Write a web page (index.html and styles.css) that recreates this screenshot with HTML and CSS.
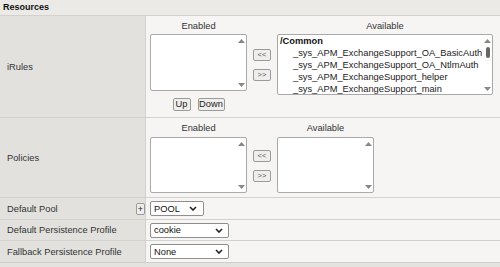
FILE: index.html
```html
<!DOCTYPE html>
<html lang="en">
<head>
<meta charset="UTF-8">
<title>Resources</title>
<link rel="stylesheet" href="styles.css">
</head>
<body>

<div class="section-title">Resources</div>

<div class="props">
  <!-- iRules -->
  <div class="label">iRules</div>
  <div class="value">
    <div class="duallist">
      <div class="col">
        <div class="col-title">Enabled</div>
        <div class="listbox small">
          <div class="items"></div>
          <div class="scroll">
            <svg width="7" height="5" viewBox="0 0 7 5"><path d="M0 4 L3.5 0 L7 4 Z" fill="#888"/></svg>
            <svg width="7" height="5" viewBox="0 0 7 5"><path d="M0 1 L3.5 5 L7 1 Z" fill="#888"/></svg>
          </div>
        </div>
        <div class="order">
          <button class="btn">Up</button>
          <button class="btn">Down</button>
        </div>
      </div>
      <div class="moves irules-moves">
        <button class="btn move">&lt;&lt;</button>
        <button class="btn move">&gt;&gt;</button>
      </div>
      <div class="col">
        <div class="col-title">Available</div>
        <div class="listbox wide">
          <div class="items">
            <div class="opt group">/Common</div>
            <div class="opt">_sys_APM_ExchangeSupport_OA_BasicAuth</div>
            <div class="opt">_sys_APM_ExchangeSupport_OA_NtlmAuth</div>
            <div class="opt">_sys_APM_ExchangeSupport_helper</div>
            <div class="opt">_sys_APM_ExchangeSupport_main</div>
          </div>
          <div class="scroll">
            <svg width="7" height="5" viewBox="0 0 7 5"><path d="M0 4 L3.5 0 L7 4 Z" fill="#888"/></svg>
            <div class="thumb"></div>
            <svg width="7" height="5" viewBox="0 0 7 5"><path d="M0 1 L3.5 5 L7 1 Z" fill="#888"/></svg>
          </div>
        </div>
      </div>
    </div>
  </div>

  <!-- Policies -->
  <div class="label">Policies</div>
  <div class="value">
    <div class="duallist">
      <div class="col">
        <div class="col-title">Enabled</div>
        <div class="listbox small policy">
          <div class="items"></div>
          <div class="scroll">
            <svg width="7" height="5" viewBox="0 0 7 5"><path d="M0 4 L3.5 0 L7 4 Z" fill="#888"/></svg>
            <svg width="7" height="5" viewBox="0 0 7 5"><path d="M0 1 L3.5 5 L7 1 Z" fill="#888"/></svg>
          </div>
        </div>
      </div>
      <div class="moves policy-moves">
        <button class="btn move">&lt;&lt;</button>
        <button class="btn move">&gt;&gt;</button>
      </div>
      <div class="col">
        <div class="col-title">Available</div>
        <div class="listbox small policy">
          <div class="items"></div>
          <div class="scroll">
            <svg width="7" height="5" viewBox="0 0 7 5"><path d="M0 4 L3.5 0 L7 4 Z" fill="#888"/></svg>
            <svg width="7" height="5" viewBox="0 0 7 5"><path d="M0 1 L3.5 5 L7 1 Z" fill="#888"/></svg>
          </div>
        </div>
      </div>
    </div>
  </div>

  <!-- Default Pool -->
  <div class="label pool-label">
    <span>Default Pool</span>
    <button class="btn plus">+</button>
  </div>
  <div class="value inline">
    <div class="dropdown pool">
      <span>POOL</span>
      <svg width="8" height="5" viewBox="0 0 8 5"><path d="M1 1 L4 4 L7 1" fill="none" stroke="#222" stroke-width="1.6"/></svg>
    </div>
  </div>

  <!-- Default Persistence Profile -->
  <div class="label">Default Persistence Profile</div>
  <div class="value inline">
    <div class="dropdown">
      <span>cookie</span>
      <svg width="8" height="5" viewBox="0 0 8 5"><path d="M1 1 L4 4 L7 1" fill="none" stroke="#222" stroke-width="1.6"/></svg>
    </div>
  </div>

  <!-- Fallback Persistence Profile -->
  <div class="label">Fallback Persistence Profile</div>
  <div class="value inline">
    <div class="dropdown">
      <span>None</span>
      <svg width="8" height="5" viewBox="0 0 8 5"><path d="M1 1 L4 4 L7 1" fill="none" stroke="#222" stroke-width="1.6"/></svg>
    </div>
  </div>
</div>

</body>
</html>
```

FILE: styles.css
```css
/* Resources panel */
body {
  margin: 0;
  font-family: "Liberation Sans", Arial, sans-serif;
  font-size: 9.3px;
  color: #333;
  background: #e4e3e0;
}

.section-title {
  height: 15px;
  line-height: 15px;
  padding-left: 3px;
  font-weight: bold;
  font-size: 9px;
  color: #111;
  background: #ebeae7;
  border-bottom: 1px solid #d3d1cd;
}

.props {
  display: grid;
  grid-template-columns: 145px 1fr;
  grid-template-rows: 101px 79px 21px 20px 21px;
  gap: 1px;
  background: #d3d1cd;
  border-bottom: 1px solid #cfcdc9;
}

.label {
  display: flex;
  align-items: center;
  padding-left: 7px;
  background: #e2e1de;
}

.pool-label {
  justify-content: space-between;
  padding-right: 0;
}

.value {
  padding: 4px 4px;
  background: #f6f5f3;
}

.value.inline {
  display: flex;
  align-items: center;
  padding-top: 0;
  padding-bottom: 0;
}

/* dual list boxes */
.duallist {
  display: flex;
  align-items: flex-start;
  gap: 6px;
}

.col {
  display: flex;
  flex-direction: column;
  align-items: center;
}

.col-title {
  line-height: 12px;
  margin-bottom: 2px;
}

.listbox {
  display: flex;
  background: #fff;
  border: 1px solid #a9a9a9;
  border-radius: 2px;
  box-sizing: border-box;
}

.listbox.small {
  width: 97px;
  height: 57px;
}

.listbox.policy {
  width: 97px;
  height: 56px;
  margin-top: 1px;
}

.listbox.wide {
  width: 216px;
  height: 61px;
}

.items {
  flex: 1;
  overflow: hidden;
  padding-left: 2px;
  color: #222;
}

.opt {
  line-height: 12px;
  white-space: nowrap;
  padding-left: 13px;
}

.opt.group {
  padding-left: 0;
  font-weight: bold;
  color: #111;
}

.scroll {
  width: 10px;
  display: flex;
  flex-direction: column;
  align-items: center;
  justify-content: space-between;
  padding: 4px 0 3px;
  box-sizing: border-box;
}

.scroll .thumb {
  width: 4px;
  height: 11px;
  margin-top: 3px;
  margin-bottom: auto;
  margin-left: 1px;
  background: #666;
  border-radius: 2px;
}

.scroll svg:first-child {
  margin-bottom: auto;
}

.listbox.wide .scroll svg:first-child {
  margin-bottom: 0;
}

.btn {
  font-family: inherit;
  font-size: 9.3px;
  color: #222;
  background: #efeeec;
  border: 1px solid #9a9a9a;
  border-radius: 2px;
  padding: 0;
  height: 13px;
  line-height: 11px;
}

.order {
  display: flex;
  gap: 7px;
  margin-top: 7px;
}

.order .btn:first-child {
  width: 18px;
}

.order .btn:last-child {
  width: 27px;
}

.moves {
  display: flex;
  flex-direction: column;
  gap: 8px;
}

.irules-moves {
  padding-top: 29px;
}

.policy-moves {
  padding-top: 28px;
}

.btn.move {
  width: 18px;
  height: 12px;
  font-size: 7.5px;
  line-height: 10px;
  color: #555;
}

.btn.plus {
  width: 9px;
  height: 12px;
  font-size: 9px;
  line-height: 10px;
  margin-top: 1px;
}

/* select boxes */
.dropdown {
  display: flex;
  align-items: center;
  justify-content: space-between;
  width: 79px;
  height: 15px;
  box-sizing: border-box;
  padding: 0 5px 0 3px;
  background: #fff;
  border: 1px solid #8f8f8f;
  border-radius: 2px;
  color: #111;
}

.dropdown.pool {
  width: 54px;
  padding-right: 6px;
}
```
